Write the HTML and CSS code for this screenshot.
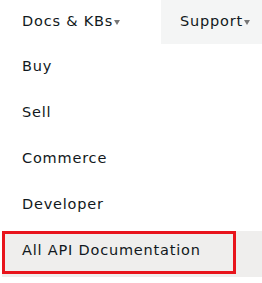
FILE: index.html
```html
<!DOCTYPE html>
<html lang="en">
<head>
    <meta charset="UTF-8">
    <meta name="viewport" content="width=device-width, initial-scale=1.0">
    <title>Docs menu</title>
    <link rel="stylesheet" href="styles.css">
</head>
<body>
    <div class="topnav">
        <div class="tab">Docs &amp; KBs<span class="caret"></span></div>
        <div class="tab tab-active">Support<span class="caret"></span></div>
    </div>

    <ul class="menu">
        <li class="menu-item">Buy</li>
        <li class="menu-item">Sell</li>
        <li class="menu-item">Commerce</li>
        <li class="menu-item">Developer</li>
        <li class="menu-item menu-item-hover highlight">All API Documentation</li>
    </ul>
</body>
</html>
```

FILE: styles.css
```css
body {
    margin: 0;
    font-family: "DejaVu Sans", "Liberation Sans", sans-serif;
    font-size: 14.5px;
    letter-spacing: 0.8px;
    color: #111820;
    background: #fff;
    width: 262px;
}

.topnav {
    display: flex;
    height: 44px;
}

.tab {
    width: 161px;
    box-sizing: border-box;
    padding: 11px 0 0 22px;
    line-height: 20px;
}

.tab-active {
    flex: 1;
    padding-left: 19px;
    background: #f4f5f5;
}

.caret {
    display: inline-block;
    margin: 0 0 1px 1px;
    border-left: 3px solid transparent;
    border-right: 3px solid transparent;
    border-top: 5px solid #767676;
}

.menu {
    list-style: none;
    margin: 3px 0 0;
    padding: 0;
}

.menu-item {
    height: 37px;
    padding: 9px 0 0 22px;
    line-height: 20px;
}

.menu-item-hover {
    margin-left: 2px;
    padding-left: 20px;
    background: #efeeed;
}

.highlight {
    position: relative;
}

.highlight::after {
    content: "";
    position: absolute;
    left: 0;
    top: 0;
    width: 234px;
    height: 43px;
    border: 3px solid #e8141c;
    box-sizing: border-box;
}
```
